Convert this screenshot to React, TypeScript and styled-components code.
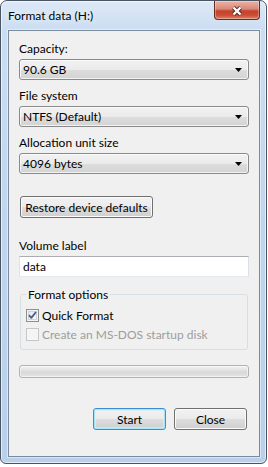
import styled, { createGlobalStyle } from 'styled-components'

const GlobalStyle = createGlobalStyle`
  html, body {
    margin: 0;
    padding: 0;
    background: #fff;
  }

  body {
    font-family: Lato, "Liberation Sans", sans-serif;
    font-size: 12px;
    color: #000;
  }
`

const Window = styled.div`
  box-sizing: border-box;
  width: 267px;
  height: 464px;
  display: flex;
  flex-direction: column;
  padding: 0 6px 6px 7px;
  border: 1px solid #4a5563;
  border-radius: 7px 7px 6px 6px;
  background: linear-gradient(
    180deg,
    #dde9f7 0px,
    #cbddf1 30px,
    #c0d6ee 220px,
    #b9d0ea 100%
  );
  box-shadow: inset 0 0 0 1px rgba(255, 255, 255, 0.6);
`

const TitleBar = styled.div`
  height: 29px;
  display: flex;
  justify-content: space-between;
  align-items: flex-start;
  flex-shrink: 0;
`

const Title = styled.div`
  margin-top: 7px;
  line-height: 15px;
  font-size: 12px;
  text-shadow: 0 0 6px rgba(255, 255, 255, 0.9);
`

const CloseButton = styled.div`
  box-sizing: border-box;
  width: 46px;
  height: 19px;
  display: flex;
  align-items: center;
  justify-content: center;
  border: 1px solid #6b2a22;
  border-top: none;
  border-radius: 0 0 4px 4px;
  background: linear-gradient(
    180deg,
    #ebb3a6 0%,
    #d98777 45%,
    #c4432c 55%,
    #c94d33 78%,
    #df8268 100%
  );
  box-shadow: inset 0 0 0 1px rgba(255, 255, 255, 0.3);

  svg {
    display: block;
    margin-top: 1px;
  }
`

const Panel = styled.div`
  box-sizing: border-box;
  flex: 1;
  display: flex;
  flex-direction: column;
  padding: 10px 10px 0 10px;
  background: #f0f0f0;
  border: 1px solid #7b8a9d;
  box-shadow: 0 0 0 1px rgba(255, 255, 255, 0.45);
`

const FieldLabel = styled.div<{ $top?: number }>`
  line-height: 15px;
  margin-top: ${(p) => p.$top ?? 0}px;
  margin-bottom: 3px;
`

const Combo = styled.div`
  box-sizing: border-box;
  height: 21px;
  display: flex;
  align-items: center;
  justify-content: space-between;
  padding: 0 6px 0 3px;
  border: 1px solid #8a8a8a;
  border-radius: 3px;
  background: linear-gradient(
    180deg,
    #f2f2f2 0%,
    #ebebeb 50%,
    #dddddd 51%,
    #d3d3d3 100%
  );
  box-shadow: inset 0 0 0 1px rgba(255, 255, 255, 0.7);
  line-height: 15px;

  svg {
    display: block;
  }
`

const Button = styled.button<{ $width: number; $default?: boolean }>`
  box-sizing: border-box;
  width: ${(p) => p.$width}px;
  height: 22px;
  padding: 0;
  font-family: inherit;
  font-size: 12px;
  line-height: 15px;
  color: #000;
  border: 1px solid ${(p) => (p.$default ? '#3c8ed0' : '#707070')};
  border-radius: 3px;
  background: linear-gradient(
    180deg,
    #f2f2f2 0%,
    #ebebeb 50%,
    #dddddd 51%,
    #cfcfcf 100%
  );
  box-shadow: ${(p) =>
    p.$default
      ? 'inset 0 0 0 1px #a5e4fb, inset 0 0 0 2px rgba(210, 242, 253, 0.6)'
      : 'inset 0 0 0 1px #fbfbfb'};
`

const RestoreButton = styled(Button)`
  margin: 22px 0 0 1px;
`

const TextInput = styled.input`
  box-sizing: border-box;
  width: 100%;
  height: 21px;
  margin: 0;
  padding: 0 3px;
  font-family: inherit;
  font-size: 12px;
  color: #000;
  background: #fff;
  border: 1px solid;
  border-color: #abadb3 #dbdfe6 #e3e9ef #e2e3ea;
  outline: none;
`

const Group = styled.fieldset`
  margin: 10px 1px 0 1px;
  padding: 4px 5px 5px 5px;
  border: 1px solid #d5dfe5;
  border-radius: 3px;
  min-inline-size: 0;
`

const GroupTitle = styled.legend`
  padding: 0 2px;
  line-height: 15px;
`

const CheckRow = styled.label<{ $disabled?: boolean }>`
  height: 19px;
  display: flex;
  align-items: center;
  gap: 3px;
  line-height: 15px;
  color: ${(p) => (p.$disabled ? '#9d9d9d' : '#000')};
`

const CheckBox = styled.span<{ $disabled?: boolean }>`
  box-sizing: border-box;
  width: 13px;
  height: 13px;
  flex-shrink: 0;
  border: 1px solid ${(p) => (p.$disabled ? '#c6c6c6' : '#8e8f8f')};
  background: ${(p) =>
    p.$disabled
      ? '#f4f4f4'
      : 'linear-gradient(135deg, #dfe1e4 0%, #f4f5f6 60%, #ffffff 100%)'};
  box-shadow: ${(p) =>
    p.$disabled ? 'inset 0 0 0 1px #f7f7f7' : 'inset 0 0 0 1px #f4f4f4, inset 0 0 0 2px #cfd3d8'};

  svg {
    display: block;
  }
`

const Progress = styled.div`
  box-sizing: border-box;
  height: 13px;
  margin-top: 15px;
  border: 1px solid #b2b2b2;
  border-radius: 3px;
  background: linear-gradient(
    180deg,
    #f4f4f4 0%,
    #e3e3e3 35%,
    #d8d8d8 60%,
    #e6e6e6 100%
  );
  box-shadow: inset 0 0 0 1px rgba(255, 255, 255, 0.5);
`

const ButtonRow = styled.div`
  display: flex;
  justify-content: flex-end;
  gap: 8px;
  margin-top: 30px;
  padding-right: 2px;
`

const Arrow = () => (
  <svg width="7" height="4" viewBox="0 0 7 4">
    <path d="M0 0h7L3.5 4z" fill="#000" />
  </svg>
)

const Check = () => (
  <svg width="11" height="11" viewBox="0 0 11 11">
    <path
      d="M2 5.2 L4.3 7.8 L9 2"
      fill="none"
      stroke="#4a5f8e"
      strokeWidth="1.9"
      strokeLinejoin="round"
    />
  </svg>
)

const CloseGlyph = () => (
  <svg width="12" height="10" viewBox="0 0 12 10">
    <path d="M2.5 1.5 L9.5 8.5 M9.5 1.5 L2.5 8.5" stroke="#5a2620" strokeWidth="4.2" />
    <path d="M2.5 1.5 L9.5 8.5 M9.5 1.5 L2.5 8.5" stroke="#ffffff" strokeWidth="2.4" />
  </svg>
)

export default function App() {
  return (
    <>
      <GlobalStyle />
      <Window>
        <TitleBar>
          <Title>Format data (H:)</Title>
          <CloseButton>
            <CloseGlyph />
          </CloseButton>
        </TitleBar>
        <Panel>
          <FieldLabel>Capacity:</FieldLabel>
          <Combo>
            <span>90.6 GB</span>
            <Arrow />
          </Combo>

          <FieldLabel $top={8}>File system</FieldLabel>
          <Combo>
            <span>NTFS (Default)</span>
            <Arrow />
          </Combo>

          <FieldLabel $top={8}>Allocation unit size</FieldLabel>
          <Combo>
            <span>4096 bytes</span>
            <Arrow />
          </Combo>

          <RestoreButton $width={133}>Restore device defaults</RestoreButton>

          <FieldLabel $top={20}>Volume label</FieldLabel>
          <TextInput defaultValue="data" />

          <Group>
            <GroupTitle>Format options</GroupTitle>
            <CheckRow>
              <CheckBox>
                <Check />
              </CheckBox>
              Quick Format
            </CheckRow>
            <CheckRow $disabled>
              <CheckBox $disabled />
              Create an MS-DOS startup disk
            </CheckRow>
          </Group>

          <Progress />

          <ButtonRow>
            <Button $width={73} $default>
              Start
            </Button>
            <Button $width={73}>Close</Button>
          </ButtonRow>
        </Panel>
      </Window>
    </>
  )
}
